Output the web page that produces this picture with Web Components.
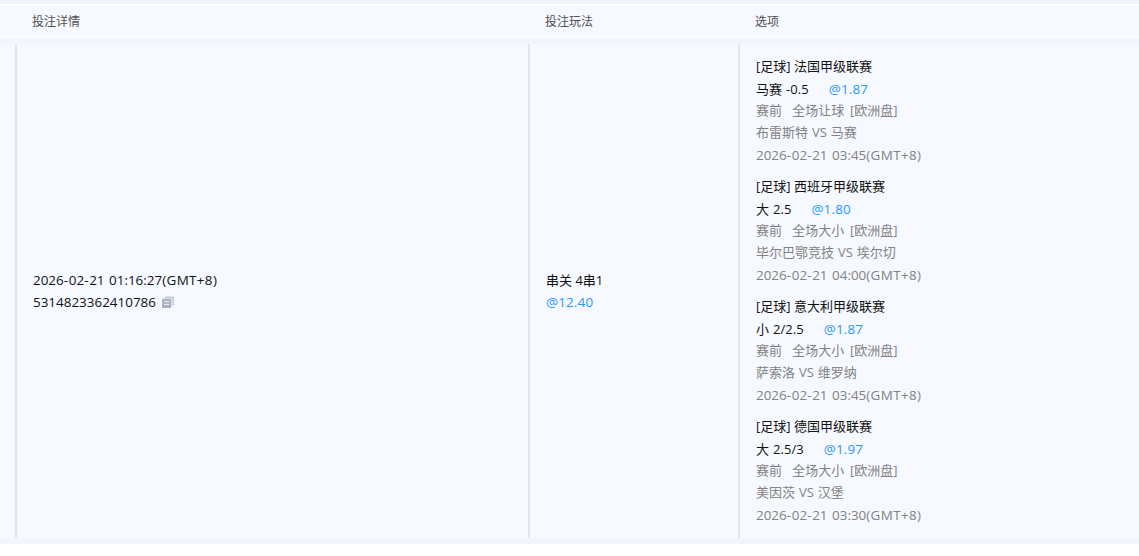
<!DOCTYPE html>
<html lang="zh"><head><meta charset="utf-8">
<style>
html,body{margin:0;padding:0;background:#fff;overflow:hidden}
body{font-family:"Open Sans","Noto Sans CJK SC",sans-serif;color:#111}
</style></head><body>
<bet-table>
  <bet-header slot="head"></bet-header>
  <bet-row>
    <bet-cell slot="c1" w="513"><bet-id time="2026-02-21 01:16:27(GMT+8)" no="5314823362410786"></bet-id></bet-cell>
    <bet-cell slot="c2" w="210"><bet-play name="串关 4串1" odds="@12.40"></bet-play></bet-cell>
    <bet-cell slot="c3" w="399">
      <bet-leg league="法国甲级联赛" pick="马赛 -0.5" odds="@1.87" market="全场让球" match="布雷斯特 VS 马赛" time="2026-02-21 03:45(GMT+8)"></bet-leg>
      <bet-leg league="西班牙甲级联赛" pick="大 2.5" odds="@1.80" market="全场大小" match="毕尔巴鄂竞技 VS 埃尔切" time="2026-02-21 04:00(GMT+8)"></bet-leg>
      <bet-leg league="意大利甲级联赛" pick="小 2/2.5" odds="@1.87" market="全场大小" match="萨索洛 VS 维罗纳" time="2026-02-21 03:45(GMT+8)"></bet-leg>
      <bet-leg league="德国甲级联赛" pick="大 2.5/3" odds="@1.97" market="全场大小" match="美因茨 VS 汉堡" time="2026-02-21 03:30(GMT+8)"></bet-leg>
    </bet-cell>
  </bet-row>
</bet-table>
<script>
const FONT='"Open Sans","Noto Sans CJK SC",sans-serif';
const timeCss=`.t{font-size:13.45px;white-space:nowrap;word-spacing:1px}.h{letter-spacing:.7px}.z{letter-spacing:.35px}`;
const fmtTime=s=>s.replace(/-/g,'<span class="h">-</span>').replace('(GMT+8)','<span class="z">(GMT+8)</span>');
class Base extends HTMLElement{
  constructor(){super();this.attachShadow({mode:'open'});}
  a(n){return this.getAttribute(n)||'';}
}
customElements.define('bet-table',class extends Base{connectedCallback(){this.shadowRoot.innerHTML=`<style>
:host{display:flex;flex-direction:column;width:1139px;height:544px;background:#f0f5fe;padding-top:4px;box-sizing:border-box;font-family:${FONT}}
</style><slot name="head"></slot><slot></slot>`;}});
customElements.define('bet-header',class extends Base{connectedCallback(){this.shadowRoot.innerHTML=`<style>
:host{display:grid;grid-template-columns:513px 210px 1fr;height:30px;background:#f6f9ff;border-top:2px solid #fff;border-bottom:2px solid #fff;margin-bottom:6px;padding-left:32px;font-size:12px;color:#505050;line-height:32px}
</style><span>投注详情</span><span>投注玩法</span><span>选项</span>`;}});
customElements.define('bet-row',class extends Base{connectedCallback(){this.shadowRoot.innerHTML=`<style>
:host{display:flex;height:494px;padding-left:15px;background:#f6f9ff}
</style><slot name="c1"></slot><slot name="c2"></slot><slot name="c3"></slot>`;}});
customElements.define('bet-cell',class extends Base{connectedCallback(){this.shadowRoot.innerHTML=`<style>
:host{display:flex;flex-direction:column;justify-content:center;gap:10px;width:${this.a('w')}px;flex:none;box-sizing:border-box;border-left:2px solid #dfe5f3;padding-left:16px;font-size:13px;line-height:22px}
</style><slot></slot>`;}});
customElements.define('bet-id',class extends Base{connectedCallback(){this.shadowRoot.innerHTML=`<style>
:host{display:block}
${timeCss}
.n{display:flex;align-items:center;gap:6px}
svg{display:block}
</style><div class="t">${fmtTime(this.a('time'))}</div><div class="n t"><span>${this.a('no')}</span>
<svg width="12" height="12" viewBox="0 0 12 12"><path d="M3 0.5H12V9.5H10.5V2H3Z" fill="#c4cad8"/><path d="M1.5 1.8H10.5V10.5H9.2V3H1.5Z" fill="#d3d8e4"/><rect y="3" width="9" height="9" fill="#aab1c2"/><rect x="2" y="5.2" width="5" height="1" fill="#eef1f8"/><rect x="2" y="8" width="5" height="1" fill="#eef1f8"/></svg></div>`;}});
customElements.define('bet-play',class extends Base{connectedCallback(){this.shadowRoot.innerHTML=`<style>
:host{display:block}
.o{color:#1f97ff;font-size:13.45px;letter-spacing:.15px}
</style><div>${this.a('name')}</div><div class="o">${this.a('odds')}</div>`;}});
customElements.define('bet-leg',class extends Base{connectedCallback(){this.shadowRoot.innerHTML=`<style>
:host{display:block;white-space:nowrap}
${timeCss}
.g{color:#828282}
.c{line-height:20px;padding-bottom:2px}
.p{word-spacing:.5px;letter-spacing:.05px}
.o{color:#1f97ff;margin-left:20px;font-size:13.45px;letter-spacing:.15px;word-spacing:0}
.s{word-spacing:0}
.m{word-spacing:2.5px}
.v{word-spacing:.5px}
</style><div class="c">[足球] ${this.a('league')}</div>
<div class="p">${this.a('pick')}<span class="o">${this.a('odds')}</span></div>
<div class="g c m"><span class="s">赛前&nbsp;&nbsp;&nbsp;</span>${this.a('market')} [欧洲盘]</div>
<div class="g c v">${this.a('match')}</div>
<div class="g t">${fmtTime(this.a('time'))}</div>`;}});
</script>
</body></html>
